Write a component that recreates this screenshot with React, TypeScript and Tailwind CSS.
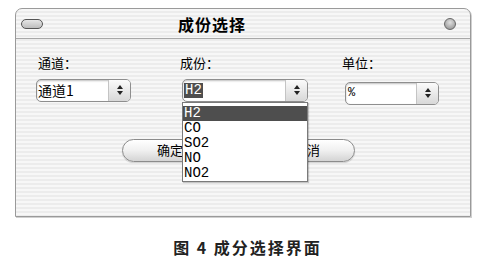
import React from 'react';

const cjk = "font-['Noto_Sans_CJK_SC',sans-serif]";
const mono = "font-['Liberation_Mono','Noto_Sans_CJK_SC',monospace]";

function Stepper() {
  return (
    <div className="flex h-full w-[22px] flex-col items-center justify-center gap-[2px] border-l border-[#c4c4c4] bg-gradient-to-b from-[#fbfbfb] to-[#d8d8d8]">
      <svg width="6" height="4" viewBox="0 0 6 4"><path d="M3 0 L6 4 L0 4 Z" fill="#222" /></svg>
      <svg width="6" height="4" viewBox="0 0 6 4"><path d="M0 0 L6 0 L3 4 Z" fill="#222" /></svg>
    </div>
  );
}

function Select({ width, children, className = '' }: { width: string; children: React.ReactNode; className?: string }) {
  return (
    <div className={`flex h-[23px] ${width} items-center overflow-hidden rounded-[5px] border border-[#8e8e8e] bg-white shadow-[inset_0_1px_2px_rgba(0,0,0,0.25)] ${className}`}>
      <div className="flex flex-1 items-center pl-[1px]">{children}</div>
      <Stepper />
    </div>
  );
}

function AquaButton({ label, width }: { label: string; width: string }) {
  return (
    <div className={`flex h-[23px] ${width} items-center justify-center rounded-full border border-[#8c8c8c] bg-gradient-to-b from-[#ffffff] via-[#f0f0f0] to-[#d4d4d4] text-[13px] text-black shadow-[0_1px_1px_rgba(0,0,0,0.15)] ${cjk}`}>
      {label}
    </div>
  );
}

export default function App() {
  const items = ['H2', 'CO', 'SO2', 'NO', 'NO2'];
  return (
    <div className="h-[269px] w-[480px] overflow-hidden bg-white pl-[15px] pt-[8px]">
      {/* window */}
      <div className="flex h-[209px] w-[456px] flex-col overflow-hidden rounded-t-[7px] border border-[#9a9a9a] bg-[repeating-linear-gradient(180deg,#f7f7f7_0px,#f7f7f7_2px,#ececec_2px,#ececec_4px)] shadow-[1px_1px_0_#d0d0d0]">
        {/* title bar */}
        <div className="flex h-[30px] items-center border-b border-[#a8a8a8] px-[5px]">
          <div className="h-[10px] w-[22px] rounded-full border border-[#555] bg-gradient-to-b from-[#e6e6e6] to-[#bdbdbd]" />
          <div className={`ml-[135px] text-[16px] font-bold tracking-[1px] text-black ${cjk}`}>成份选择</div>
          <div className="ml-auto mr-[9px] h-[12px] w-[12px] rounded-full border border-[#666] bg-[radial-gradient(circle_at_50%_35%,#e0e0e0,#8a8a8a)]" />
        </div>

        {/* body */}
        <div className="flex flex-col pl-[20px] pt-[14px]">
          <div className={`flex text-[13px] text-black ${cjk}`}>
            <div className="w-[143px] pl-[2px]">通道：</div>
            <div className="w-[163px] pl-[1px]">成份：</div>
            <div>单位：</div>
          </div>

          <div className="mt-[6px] flex items-start">
            <div className="w-[146px]">
              <Select width="w-[95px]">
                <span className={`text-[14px] text-black ${cjk}`}>通道1</span>
              </Select>
            </div>
            <div className="relative w-[163px]">
              <Select width="w-[126px]">
                <span className={`mt-[1px] bg-[#4e4e4e] px-[1px] text-[14px] leading-[15px] text-white ${mono}`}>H2</span>
              </Select>
              {/* open dropdown list */}
              <div className="absolute left-0 top-[23px] z-10 w-[126px] border border-[#7a7a7a] bg-white pt-[3px] shadow-[1px_1px_1px_rgba(0,0,0,0.2)]">
                {items.map((it, i) => (
                  <div
                    key={it}
                    className={`h-[15px] pl-[1px] text-[14px] leading-[15px] ${mono} ${i === 0 ? 'bg-[#4e4e4e] text-white' : 'text-black'}`}
                  >
                    {it}
                  </div>
                ))}
              </div>
            </div>
            <Select width="w-[94px]" className="mt-[3px]">
              <span className={`pl-[1px] text-[12px] text-black ${mono}`}>%</span>
            </Select>
          </div>

          <div className="mt-[34px] flex gap-[41px] pl-[86px]">
            <AquaButton label="确定" width="w-[96px]" />
            <AquaButton label="取消" width="w-[96px]" />
          </div>
        </div>
      </div>

      <div className={`mt-[18px] w-[465px] text-center text-[16px] font-bold tracking-[2px] text-[#222] ${cjk}`}>
        图 4 成分选择界面
      </div>
    </div>
  );
}
